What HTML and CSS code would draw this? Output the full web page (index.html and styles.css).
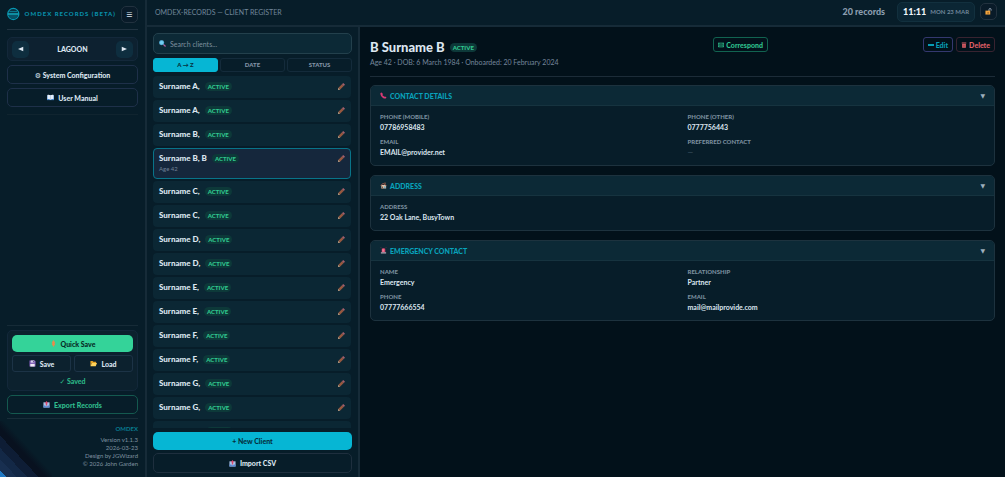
FILE: index.html
```
<!DOCTYPE html>
<html lang="en">
<head>
    <meta charset="UTF-8">
    <title>OMDEX-RECORDS</title>
    <link rel="stylesheet" href="styles.css">
</head>
<body>
    <svg class="symbols" aria-hidden="true">
        <symbol id="pencil" viewBox="0 0 16 16">
            <path d="M0 16l1-5 4 4z" fill="#d8b08c"/>
            <path d="M1 11l8-8 4 4-8 8z" fill="#96583f"/>
            <path d="M9 3l3-3 4 4-3 3z" fill="#a4606c"/>
        </symbol>
        <symbol id="tray" viewBox="0 0 16 16">
            <path d="M1 3h14v12H1z" fill="#a9c4e8"/>
            <path d="M1 10h4l1 2h4l1-2h4v5H1z" fill="#5b86cf"/>
            <path d="M8 0l4 5H9.500v5h-3V5H4z" fill="#d8476c"/>
        </symbol>
        <symbol id="floppy" viewBox="0 0 16 16">
            <path d="M1 1h12l2 2v12H1z" fill="#7c5bb4"/>
            <path d="M4 1h8v5H4z" fill="#d9d3ee"/>
            <path d="M3 9h10v6H3z" fill="#f0e9f5"/>
            <path d="M9 2h2v3H9z" fill="#513779"/>
        </symbol>
        <symbol id="folder" viewBox="0 0 16 16">
            <path d="M1 2h5l2 2h6v3H4L1 14z" fill="#e8a324"/>
            <path d="M4 7h12l-3 7H1z" fill="#ffd35a"/>
        </symbol>
        <symbol id="bolt" viewBox="0 0 16 16">
            <path d="M8 0l4 6-2 1 2 2-4 7-4-7 2-2-2-1z" fill="#e88b4c"/>
        </symbol>
        <symbol id="book" viewBox="0 0 16 16">
            <path d="M0 3h16v11H0z" fill="#3f82c8"/>
            <path d="M1 2c3-1 5 0 7 1 2-1 4-2 7-1v10c-3-1-5 0-7 1-2-1-4-2-7-1z" fill="#e7f0fa"/>
            <path d="M8 3v10" stroke="#9bb4d0"/>
        </symbol>
        <symbol id="phone" viewBox="0 0 16 16">
            <path d="M1 2l3-1 3 4-2 2 5 4 2-1 3 3-2 2C7 16 0 8 1 2z" fill="#d93a75"/>
        </symbol>
        <symbol id="house" viewBox="0 0 16 16">
            <path d="M3 7h11v8H3z" fill="#d9c6b0"/>
            <path d="M1 8l6-6 8 6-1 1-7-5-5 5z" fill="#c0604a"/>
            <path d="M10 1h3v5l-3-2zM4 10h3v5H4z" fill="#8b5a45"/>
            <path d="M9 10h4v3H9z" fill="#5f9fc4"/>
        </symbol>
        <symbol id="siren" viewBox="0 0 16 16">
            <path d="M4 12V6c0-4 8-4 8 0v6z" fill="#e0486f"/>
            <path d="M6 5h2v6H6z" fill="#f7b3c2"/>
            <path d="M2 12h12v3H2z" fill="#b9a9b8"/>
            <path d="M2 1l2 2M14 1l-2 2" stroke="#e0486f"/>
        </symbol>
        <symbol id="search" viewBox="0 0 16 16">
            <path d="M10 10l5 5" stroke="#b55a9c" stroke-width="3"/>
            <circle cx="6" cy="6" r="5.500" fill="#74cdf2"/>
            <circle cx="6" cy="6" r="5" fill="none" stroke="#3f9ccb"/>
        </symbol>
        <symbol id="padlock" viewBox="0 0 16 16">
            <path d="M9 8V4c0-4 5-4 5 0v2" fill="none" stroke="#a9b8c6" stroke-width="2"/>
            <path d="M1 6h11v9H1z" fill="#f2a33c"/>
            <path d="M6 9h2v4H6z" fill="#7d4a1c"/>
        </symbol>
        <symbol id="mail" viewBox="0 0 16 16">
            <path d="M1 3h14v10H1zM1 3l7 6 7-6M1 13l5-5M15 13l-5-5" fill="none" stroke="currentColor" stroke-width="2"/>
        </symbol>
        <symbol id="bin" viewBox="0 0 16 16">
            <path d="M2 1h12v3H2zM3 5h10v10H3z" fill="currentColor"/>
            <path d="M6 7v6M10 7v6" stroke="#5b1f2b"/>
        </symbol>
    </svg>

    <div class="app">
        <aside class="sidebar">
            <div class="brand">
                <svg class="logo" viewBox="0 0 26 26">
                    <circle cx="13" cy="13" r="11.500" fill="#093345" stroke="#0899b3" stroke-width="2.500"/>
                    <path d="M5 8h16" stroke="#0b7f94" stroke-width="2"/>
                    <path d="M2 13h22" stroke="#12b0c6" stroke-width="3"/>
                    <path d="M3 15h20c-2 11-18 11-20 0z" fill="#075268"/>
                </svg>
                <span class="brand-name">OMDEX RECORDS (BETA)</span>
                <button class="menu-btn" aria-label="Menu">☰</button>
            </div>

            <div class="theme">
                <button class="arrow-btn" aria-label="Previous theme"><svg viewBox="0 0 8 8"><path d="M7 1v6L0 4z"/></svg></button>
                <span>LAGOON</span>
                <button class="arrow-btn" aria-label="Next theme"><svg viewBox="0 0 8 8"><path d="M1 1v6l7-3z"/></svg></button>
            </div>
            <button class="side-btn"><span>⚙ System Configuration</span></button>
            <button class="side-btn"><svg class="icon"><use href="#book"/></svg>User Manual</button>

            <div class="side-space"></div>

            <div class="save-box">
                <button class="quick-save"><svg class="icon"><use href="#bolt"/></svg>Quick Save</button>
                <div class="save-row">
                    <button><svg class="icon"><use href="#floppy"/></svg>Save</button>
                    <button><svg class="icon"><use href="#folder"/></svg>Load</button>
                </div>
                <p class="saved">✓ Saved</p>
            </div>
            <button class="side-btn export"><svg class="icon"><use href="#tray"/></svg>Export Records</button>

            <footer class="credits">
                <strong>OMDEX</strong>
                <span>Version v1.1.3</span>
                <span>2026-03-23</span>
                <span>Design by JGWizard</span>
                <span>© 2026 John Garden</span>
            </footer>
            <div class="ribbon"></div>
        </aside>

        <div class="workspace">
            <header class="topbar">
                <span class="title">OMDEX-RECORDS — CLIENT REGISTER</span>
                <span class="count">20 records</span>
                <div class="clock"><b>11:11</b><span>MON 23 MAR</span></div>
                <button class="menu-btn" aria-label="Unlocked"><svg class="icon"><use href="#padlock"/></svg></button>
            </header>

            <div class="columns">
                <section class="clients">
                    <label class="search">
                        <svg class="icon"><use href="#search"/></svg>
                        <input type="text" placeholder="Search clients..." aria-label="Search clients">
                    </label>
                    <div class="tabs">
                        <button class="active">A → Z</button>
                        <button>DATE</button>
                        <button>STATUS</button>
                    </div>
                    <div class="list">
                        <div class="client"><b>Surname A,</b><span class="badge">ACTIVE</span><button aria-label="Edit"><svg class="icon"><use href="#pencil"/></svg></button></div>
                        <div class="client"><b>Surname A,</b><span class="badge">ACTIVE</span><button aria-label="Edit"><svg class="icon"><use href="#pencil"/></svg></button></div>
                        <div class="client"><b>Surname B,</b><span class="badge">ACTIVE</span><button aria-label="Edit"><svg class="icon"><use href="#pencil"/></svg></button></div>
                        <div class="client selected"><b>Surname B, B</b><span class="badge">ACTIVE</span><button aria-label="Edit"><svg class="icon"><use href="#pencil"/></svg></button><small>Age 42</small></div>
                        <div class="client"><b>Surname C,</b><span class="badge">ACTIVE</span><button aria-label="Edit"><svg class="icon"><use href="#pencil"/></svg></button></div>
                        <div class="client"><b>Surname C,</b><span class="badge">ACTIVE</span><button aria-label="Edit"><svg class="icon"><use href="#pencil"/></svg></button></div>
                        <div class="client"><b>Surname D,</b><span class="badge">ACTIVE</span><button aria-label="Edit"><svg class="icon"><use href="#pencil"/></svg></button></div>
                        <div class="client"><b>Surname D,</b><span class="badge">ACTIVE</span><button aria-label="Edit"><svg class="icon"><use href="#pencil"/></svg></button></div>
                        <div class="client"><b>Surname E,</b><span class="badge">ACTIVE</span><button aria-label="Edit"><svg class="icon"><use href="#pencil"/></svg></button></div>
                        <div class="client"><b>Surname E,</b><span class="badge">ACTIVE</span><button aria-label="Edit"><svg class="icon"><use href="#pencil"/></svg></button></div>
                        <div class="client"><b>Surname F,</b><span class="badge">ACTIVE</span><button aria-label="Edit"><svg class="icon"><use href="#pencil"/></svg></button></div>
                        <div class="client"><b>Surname F,</b><span class="badge">ACTIVE</span><button aria-label="Edit"><svg class="icon"><use href="#pencil"/></svg></button></div>
                        <div class="client"><b>Surname G,</b><span class="badge">ACTIVE</span><button aria-label="Edit"><svg class="icon"><use href="#pencil"/></svg></button></div>
                        <div class="client"><b>Surname G,</b><span class="badge">ACTIVE</span><button aria-label="Edit"><svg class="icon"><use href="#pencil"/></svg></button></div>
                        <div class="client"><b>Surname H,</b><span class="badge">ACTIVE</span><button aria-label="Edit"><svg class="icon"><use href="#pencil"/></svg></button></div>
                    </div>
                    <button class="new-client">+ New Client</button>
                    <button class="import"><svg class="icon"><use href="#tray"/></svg>Import CSV</button>
                </section>

                <main class="detail">
                    <div class="detail-head">
                        <div class="person">
                            <h1>B Surname B <span class="badge">ACTIVE</span></h1>
                            <p>Age 42 · DOB: 6 March 1984 · Onboarded: 20 February 2024</p>
                        </div>
                        <button class="action correspond"><svg class="icon"><use href="#mail"/></svg>Correspond</button>
                        <div class="actions">
                            <button class="action edit"><i></i>Edit</button>
                            <button class="action delete"><svg class="icon"><use href="#bin"/></svg>Delete</button>
                        </div>
                    </div>

                    <details class="card" open>
                        <summary><svg class="icon"><use href="#phone"/></svg>CONTACT DETAILS<span class="caret">▼</span></summary>
                        <dl>
                            <div><dt>PHONE (MOBILE)</dt><dd>07786958483</dd></div>
                            <div><dt>PHONE (OTHER)</dt><dd>0777756443</dd></div>
                            <div><dt>EMAIL</dt><dd>EMAIL@provider.net</dd></div>
                            <div><dt>PREFERRED CONTACT</dt><dd class="empty">—</dd></div>
                        </dl>
                    </details>
                    <details class="card" open>
                        <summary><svg class="icon"><use href="#house"/></svg>ADDRESS<span class="caret">▼</span></summary>
                        <dl>
                            <div><dt>ADDRESS</dt><dd>22 Oak Lane, BusyTown</dd></div>
                        </dl>
                    </details>
                    <details class="card" open>
                        <summary><svg class="icon"><use href="#siren"/></svg>EMERGENCY CONTACT<span class="caret">▼</span></summary>
                        <dl>
                            <div><dt>NAME</dt><dd>Emergency</dd></div>
                            <div><dt>RELATIONSHIP</dt><dd>Partner</dd></div>
                            <div><dt>PHONE</dt><dd>07777666554</dd></div>
                            <div><dt>EMAIL</dt><dd>mail@mailprovide.com</dd></div>
                        </dl>
                    </details>
                </main>
            </div>
        </div>
    </div>
</body>
</html>
```
FILE: styles.css
```
* {
    box-sizing: border-box;
}

body {
    margin: 0;
    background-color: #02111a;
    color: #dce6f0;
    font-family: Lato, "DejaVu Sans", sans-serif;
    font-size: 7px;
    line-height: 10px;
}

h1, p, dl, dd {
    margin: 0;
}

button, input {
    font: inherit;
    color: inherit;
}

button {
    display: flex;
    align-items: center;
    justify-content: center;
    gap: 4px;
    padding: 0;
    border: 1px solid #1c3346;
    border-radius: 5px;
    background-color: transparent;
    font-weight: 900;
    cursor: pointer;
}

.symbols {
    display: none;
}

.icon {
    width: 7px;
    height: 7px;
    flex: none;
}

.app {
    display: flex;
    height: 100vh;
    overflow: hidden;
}

/* sidebar */
.sidebar {
    position: relative;
    display: flex;
    flex-direction: column;
    gap: 4px;
    width: 147px;
    flex: none;
    padding: 6px 7px;
    border-right: 2px solid #162b38;
    background-color: #071d29;
}

.brand {
    display: flex;
    align-items: center;
    gap: 5px;
    height: 24px;
    margin-bottom: 3px;
    padding-bottom: 7px;
    border-bottom: 1px solid #213442;
}

.logo {
    width: 14px;
    height: 14px;
}

.brand-name {
    flex: 1;
    color: #078fa9;
    font-size: 6px;
    font-weight: 900;
    letter-spacing: 1px;
    white-space: nowrap;
}

.menu-btn {
    width: 17px;
    height: 17px;
    flex: none;
    border-color: #22323f;
    background-color: #091b29;
}

.theme {
    display: flex;
    align-items: center;
    justify-content: space-between;
    height: 24px;
    padding: 0 4px;
    border: 1px solid #13283a;
    border-radius: 5px;
    background-color: #0d2130;
    font-weight: 900;
}

.arrow-btn {
    width: 17px;
    height: 17px;
    border: none;
    background-color: #0e2e3f;
}

.arrow-btn svg {
    width: 6px;
    height: 6px;
    fill: #dce6f0;
}

.side-btn {
    height: 19px;
    flex: none;
    border-color: #1e3049;
}

.side-space {
    flex: 1;
    margin-top: 3px;
    border-top: 1px solid #10242f;
    border-bottom: 1px solid #162b37;
}

.save-box {
    padding: 4px;
    border: 1px solid #13283a;
    border-radius: 5px;
    background-color: #0c212e;
}

.quick-save {
    width: 100%;
    height: 17px;
    border: none;
    background-color: #34d399;
    color: #062a26;
}

.save-row {
    display: grid;
    grid-template-columns: 1fr 1fr;
    gap: 3px;
    margin-top: 3px;
}

.save-row button {
    height: 17px;
    border-radius: 3px;
}

.saved {
    padding: 4px 0 0;
    color: #2bb585;
    font-weight: 900;
    text-align: center;
}

.export {
    border-color: #14594f;
    color: #30bd8d;
}

.credits {
    display: flex;
    flex-direction: column;
    padding: 5px 0 3px;
    border-top: 1px solid #182d39;
    color: #7f92a0;
    font-size: 6px;
    line-height: 8px;
    text-align: right;
}

.credits strong {
    margin-bottom: 2px;
    color: #087c91;
    font-weight: 700;
    line-height: 10px;
}

/* striped corner over the sidebar */
.ribbon {
    position: absolute;
    left: 0;
    bottom: 0;
    width: 52px;
    height: 56px;
    background: linear-gradient(to top right, #2079c4 0 6%, #182f50 6% 16%, #132846 16% 26%, #0e1d35 26% 37%, #08111f 37% 44%, transparent 54%);
    pointer-events: none;
}

/* top bar */
.workspace {
    display: flex;
    flex-direction: column;
    flex: 1;
    min-width: 0;
}

.topbar {
    display: flex;
    align-items: center;
    height: 27px;
    flex: none;
    padding: 0 8px 2px;
    border-bottom: 2px solid #162b38;
    background-color: #071d29;
}

.title {
    flex: 1;
    color: #71879a;
}

.count {
    color: #8c9db0;
    font-size: 9px;
    font-weight: 900;
}

.clock {
    display: flex;
    align-items: center;
    gap: 4px;
    height: 20px;
    margin: 0 5px 0 12px;
    padding: 0 5px;
    border: 1px solid #12303e;
    border-radius: 5px;
    background-color: #0b2634;
    color: #71879a;
    font-size: 6px;
    font-weight: 700;
}

.clock b {
    color: #f0f6fb;
    font-size: 9px;
    font-weight: 900;
}

.columns {
    display: flex;
    flex: 1;
    min-height: 0;
}

/* client list */
.clients {
    display: flex;
    flex-direction: column;
    width: 213px;
    flex: none;
    padding: 6px 6px 4px;
    border-right: 2px solid #162b38;
    background-color: #071d29;
}

.search {
    display: flex;
    align-items: center;
    gap: 4px;
    height: 21px;
    flex: none;
    padding: 0 5px;
    border: 1px solid #23404c;
    border-radius: 5px;
    background-color: #0c2936;
}

.search input {
    flex: 1;
    min-width: 0;
    padding: 0;
    border: none;
    outline: none;
    background: none;
}

.search input::placeholder {
    color: #7d909e;
}

.tabs {
    display: grid;
    grid-template-columns: 1fr 1fr 1fr;
    gap: 2px;
    margin: 4px 0;
}

.tabs button {
    height: 14px;
    border-color: #142b3b;
    border-radius: 3px;
    color: #8394a6;
    font-size: 6px;
}

.tabs .active {
    border-color: #06b6d4;
    background-color: #06b6d4;
    color: #05303d;
}

.list {
    display: flex;
    flex-direction: column;
    gap: 2px;
    flex: 1;
    min-height: 0;
    overflow: hidden;
}

.client {
    display: flex;
    flex-wrap: wrap;
    align-items: center;
    flex: none;
    margin-right: 1px;
    padding: 4px 6px 6px;
    border-radius: 4px;
    background-color: #0b2734;
    line-height: 12px;
}

.client b {
    font-size: 8px;
    font-weight: 900;
}

.client button {
    margin-left: auto;
    border: none;
}

.client.selected {
    padding: 3px 5px 5px;
    border: 1px solid #087489;
    background-color: #15273c;
}

.client small {
    width: 100%;
    color: #718197;
    font-size: 6px;
    line-height: 9px;
}

.badge {
    margin-left: 5px;
    padding: 0 3px;
    border-radius: 5px;
    background-color: #0d3939;
    color: #30c78f;
    font-size: 6px;
    font-weight: 900;
    line-height: 9px;
}

.new-client,
.import {
    height: 18px;
    flex: none;
    margin-top: 4px;
}

.new-client {
    border: none;
    background-color: #06b6d4;
    color: #04303d;
}

.import {
    height: 20px;
    margin-top: 3px;
    border-color: #1e2f3e;
}

/* detail pane */
.detail {
    flex: 1;
    min-width: 0;
    padding: 10px;
}

.detail-head {
    display: flex;
    align-items: flex-start;
    justify-content: space-between;
    height: 40px;
    margin-bottom: 8px;
    border-bottom: 1px solid #1c2c38;
}

.person h1 {
    display: flex;
    align-items: center;
    height: 20px;
    font-size: 13px;
    font-weight: 900;
}

.person p {
    color: #74869a;
}

.actions {
    display: flex;
    gap: 3px;
}

.action {
    gap: 2px;
    height: 15px;
    padding: 0 4px;
    border-radius: 3px;
}

.action .icon {
    width: 6px;
    height: 6px;
}

.correspond {
    border-color: #116350;
    color: #2fc38f;
}

.edit {
    border-color: #34386f;
    color: #079cb5;
}

.edit i {
    width: 6px;
    height: 2px;
    background-color: #079cb5;
}

.delete {
    border-color: #382330;
    color: #e06068;
}

.card {
    margin-bottom: 9px;
    border: 1px solid #1d323e;
    border-radius: 5px;
    background-color: #071d29;
    overflow: hidden;
}

.card summary {
    display: flex;
    align-items: center;
    gap: 3px;
    height: 20px;
    padding: 0 9px;
    border-bottom: 1px solid #16333f;
    background-color: #0c2936;
    color: #08a2bb;
    font-weight: 900;
    cursor: pointer;
}

.card .caret {
    margin-left: auto;
    color: #9fb0bd;
    font-size: 6px;
}

.card dl {
    display: grid;
    grid-template-columns: 1fr 1fr;
    gap: 4px 10px;
    padding: 6px 9px 7px;
}

.card dt {
    color: #7a8e9e;
    font-size: 6px;
    font-weight: 900;
}

.card dd {
    line-height: 11px;
    font-weight: 700;
}

.card .empty {
    color: #344a58;
}
```
